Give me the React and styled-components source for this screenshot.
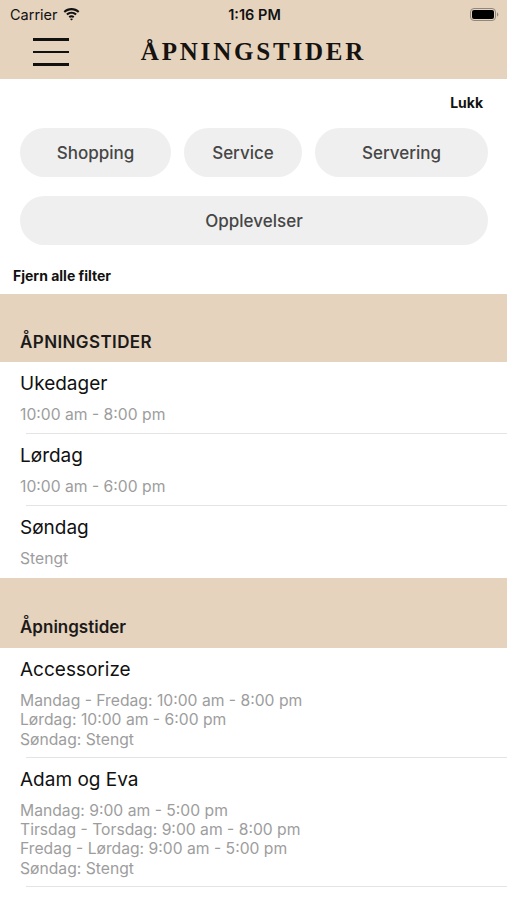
import React from 'react';
import styled, { createGlobalStyle } from 'styled-components';

const beige = '#e5d3be';

const GlobalStyle = createGlobalStyle`
  html, body {
    margin: 0;
    padding: 0;
    background: #fff;
  }
  body {
    font-family: 'Inter', 'Roboto', 'Liberation Sans', sans-serif;
    color: #111;
  }
`;

const Page = styled.div`
  width: 507px;
  min-height: 900px;
  background: #fff;
  overflow: hidden;
`;

const TopBar = styled.header`
  background: ${beige};
  height: 79px;
  display: flex;
  flex-direction: column;
`;

const StatusBar = styled.div`
  height: 28px;
  display: grid;
  grid-template-columns: 1fr auto 1fr;
  align-items: center;
  padding: 0 8px 0 10px;
  font-size: 14.5px;
  color: #111;
`;

const Carrier = styled.div`
  display: flex;
  align-items: center;
  gap: 5px;
`;

const Clock = styled.div`
  font-weight: 600;
`;

const Battery = styled.div`
  justify-self: end;
  display: flex;
  align-items: center;
`;

const NavBar = styled.div`
  flex: 1;
  display: grid;
  grid-template-columns: 1fr auto 1fr;
  align-items: center;
  padding: 0 33px 3px;
`;

const Burger = styled.div`
  display: flex;
  flex-direction: column;
  gap: 10px;
  width: 36px;
`;

const BurgerLine = styled.span`
  display: block;
  height: 2.5px;
  background: #111;
`;

const Title = styled.h1`
  margin: 0;
  font-family: 'Liberation Serif', 'DejaVu Serif', serif;
  font-weight: 700;
  font-size: 25px;
  letter-spacing: 2.8px;
  color: #151210;
`;

const FilterPanel = styled.section`
  padding: 15px 19px 0 20px;
  display: flex;
  flex-direction: column;
`;

const CloseLink = styled.div`
  align-self: flex-end;
  font-size: 14px;
  font-weight: 700;
  margin-right: 5px;
  line-height: 17px;
`;

const PillRow = styled.div`
  display: grid;
  grid-template-columns: ${({ $cols }) => $cols};
  gap: 13px;
  margin-top: ${({ $top }) => $top}px;
`;

const Pill = styled.button`
  height: 49px;
  border: 0;
  border-radius: 25px;
  background: #efefef;
  color: #464646;
  font-family: inherit;
  font-size: 17px;
  font-weight: 500;
  padding: 0;
`;

const ClearFilters = styled.div`
  margin: 22px 0 0 -7px;
  font-size: 14px;
  font-weight: 700;
  line-height: 17px;
  padding-bottom: 10px;
`;

const SectionHead = styled.div`
  background: ${beige};
  height: ${({ $h }) => $h}px;
  display: flex;
  align-items: flex-end;
  padding: 0 20px ${({ $pb }) => $pb}px;
  box-sizing: border-box;
  font-size: 17px;
  font-weight: 600;
  color: #1c1a18;
  text-transform: ${({ $upper }) => ($upper ? 'uppercase' : 'none')};
  letter-spacing: ${({ $upper }) => ($upper ? '0.4px' : '0')};
`;

const Row = styled.div`
  position: relative;
  padding: 10px 20px 9px;
  min-height: ${({ $h }) => $h}px;
  box-sizing: border-box;
  &::after {
    content: '';
    position: absolute;
    left: 26px;
    right: 0;
    bottom: 0;
    height: 1px;
    background: #e4e4e4;
    display: ${({ $noLine }) => ($noLine ? 'none' : 'block')};
  }
`;

const RowTitle = styled.div`
  font-size: 19px;
  line-height: 23px;
  color: #111;
`;

const RowLines = styled.div`
  margin-top: 10px;
  font-size: 15.7px;
  line-height: 19.3px;
  color: #9d9d9d;
`;

const weekly = [
  { day: 'Ukedager', hours: '10:00 am - 8:00 pm' },
  { day: 'Lørdag', hours: '10:00 am - 6:00 pm' },
  { day: 'Søndag', hours: 'Stengt' },
];

const shops = [
  {
    name: 'Accessorize',
    lines: ['Mandag - Fredag: 10:00 am - 8:00 pm', 'Lørdag: 10:00 am - 6:00 pm', 'Søndag: Stengt'],
  },
  {
    name: 'Adam og Eva',
    lines: [
      'Mandag: 9:00 am - 5:00 pm',
      'Tirsdag - Torsdag: 9:00 am - 8:00 pm',
      'Fredag - Lørdag: 9:00 am - 5:00 pm',
      'Søndag: Stengt',
    ],
  },
];

function Wifi() {
  return (
    <svg width="17" height="13" viewBox="0 0 17 13">
      <path d="M8.5 2.2c2.5 0 4.8 1 6.5 2.6l1.4-1.5C14.3 1.3 11.5.1 8.5.1S2.7 1.3.6 3.3L2 4.8c1.7-1.6 4-2.6 6.5-2.6z" fill="#111" />
      <path d="M8.5 5.8c1.5 0 2.9.6 3.9 1.5l1.4-1.5C12.4 4.5 10.5 3.7 8.5 3.7S4.6 4.5 3.2 5.8l1.4 1.5c1-.9 2.4-1.5 3.9-1.5z" fill="#111" />
      <path d="M8.5 9.3c.6 0 1.1.2 1.5.6l1.4-1.5c-.8-.7-1.8-1.1-2.9-1.1s-2.1.4-2.9 1.1L7 9.9c.4-.4.9-.6 1.5-.6z" fill="#111" />
      <path d="M8.5 12.6L10 11c-.4-.4-.9-.6-1.5-.6s-1.1.2-1.5.6z" fill="#111" />
    </svg>
  );
}

function BatteryIcon() {
  return (
    <svg width="29" height="13" viewBox="0 0 29 13">
      <rect x="0.5" y="0.5" width="25" height="12" rx="3.5" fill="none" stroke="#8f877f" strokeWidth="1" />
      <rect x="2" y="2" width="22" height="9" rx="2" fill="#000" />
      <path d="M27 4.5v4c.8-.3 1.3-1 1.3-2s-.5-1.7-1.3-2z" fill="#8f877f" />
    </svg>
  );
}

export default function App() {
  return (
    <Page>
      <GlobalStyle />
      <TopBar>
        <StatusBar>
          <Carrier>
            Carrier <Wifi />
          </Carrier>
          <Clock>1:16 PM</Clock>
          <Battery>
            <BatteryIcon />
          </Battery>
        </StatusBar>
        <NavBar>
          <Burger>
            <BurgerLine />
            <BurgerLine />
            <BurgerLine />
          </Burger>
          <Title>ÅPNINGSTIDER</Title>
          <div />
        </NavBar>
      </TopBar>

      <FilterPanel>
        <CloseLink>Lukk</CloseLink>
        <PillRow $cols="151px 118px 1fr" $top={17}>
          <Pill>Shopping</Pill>
          <Pill>Service</Pill>
          <Pill>Servering</Pill>
        </PillRow>
        <PillRow $cols="1fr" $top={19}>
          <Pill>Opplevelser</Pill>
        </PillRow>
        <ClearFilters>Fjern alle filter</ClearFilters>
      </FilterPanel>

      <SectionHead $h={68} $pb={10} $upper>
        Åpningstider
      </SectionHead>
      {weekly.map((w, i) => (
        <Row key={w.day} $h={72} $noLine={i === weekly.length - 1}>
          <RowTitle>{w.day}</RowTitle>
          <RowLines>{w.hours}</RowLines>
        </Row>
      ))}

      <SectionHead $h={70} $pb={11}>
        Åpningstider
      </SectionHead>
      {shops.map((s) => (
        <Row key={s.name} $h={0}>
          <RowTitle>{s.name}</RowTitle>
          <RowLines>
            {s.lines.map((l) => (
              <div key={l}>{l}</div>
            ))}
          </RowLines>
        </Row>
      ))}
    </Page>
  );
}
